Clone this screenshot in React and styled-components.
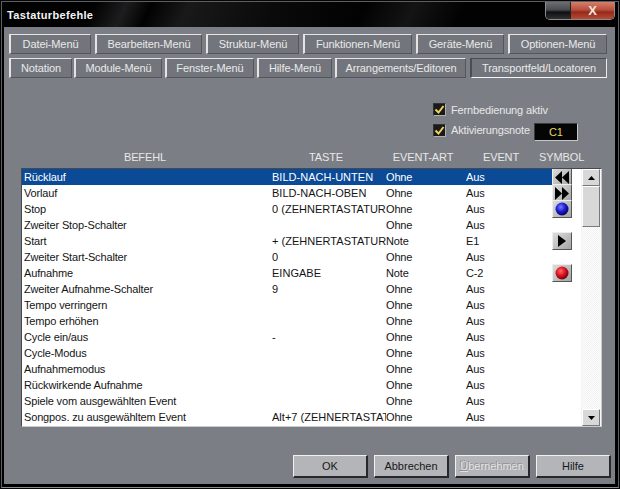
import React from "react";
import styled, { createGlobalStyle } from "styled-components";

const Global = createGlobalStyle`
  html, body { margin: 0; padding: 0; background: #000; }
  body { width: 620px; height: 489px; overflow: hidden; font-family: "Liberation Sans", Arial, sans-serif; }
  #root { width: 620px; height: 489px; }
`;

const Frame = styled.div`
  box-sizing: border-box;
  width: 620px;
  height: 489px;
  background: #050505;
  padding: 1px 0 1px 1px;
  display: flex;
  flex-direction: column;
`;
const Outer = styled.div`
  box-sizing: border-box;
  flex: 1;
  width: 618px;
  border: 1px solid #5c5f62;
  border-bottom: 1px solid #8a8d90;
  background: #000;
  display: flex;
  flex-direction: column;
  padding: 0 3px 3px 2px;
`;
const TitleBar = styled.div`
  height: 25px;
  flex: none;
  margin: 0 -3px 0 -2px;
  padding: 0 0 0 5px;
  display: flex;
  justify-content: space-between;
  align-items: flex-start;
  background:
    linear-gradient(115deg, transparent 15%, #1d1d1f 20%, transparent 24%, #191919 30%, #0a0a0a 44%, transparent 58%, #141414 66%, transparent 74%),
    #020202;
`;
const Title = styled.div`
  color: #f4f4f4;
  font-weight: 700;
  font-size: 11px;
  line-height: 13px;
  letter-spacing: 0.35px;
  padding-top: 7px;
`;
const Controls = styled.div`
  display: flex;
  height: 17px;
  margin-right: 3px;
  border: 1px solid #8d8d8d;
  border-top: 0;
  border-radius: 0 0 5px 5px;
  overflow: hidden;
`;
const MinBtn = styled.div`
  width: 24px;
  background: linear-gradient(#6d7072, #4a4d4f 45%, #0e0f10 60%, #2f3133);
  border-right: 1px solid #222;
`;
const CloseBtn = styled.div`
  width: 43px;
  display: flex;
  align-items: center;
  justify-content: center;
  color: #f0e8dc;
  font: 700 13px "Liberation Sans", sans-serif;
  background: linear-gradient(#d5806c, #b8503c 45%, #96291a 60%, #b84c36);
`;
const Body = styled.div`
  flex: 1;
  background: #7b7e84;
  padding: 7px 5px 0 5px;
  display: flex;
  flex-direction: column;
  min-height: 0;
`;
const TabRow = styled.div`
  display: flex;
  margin-bottom: ${p => p.$mb}px;
`;
const Tab = styled.div`
  box-sizing: border-box;
  width: ${p => p.$w}px;
  margin-right: ${p => p.$gap}px;
  height: 20px;
  flex: none;
  display: flex;
  align-items: center;
  justify-content: center;
  color: #e9e9e9;
  font-size: 11px;
  letter-spacing: -0.1px;
  white-space: nowrap;
  background: #72767c;
  border: 1px solid;
  border-width: 1px 1px 1px 2px;
  border-color: ${p => p.$down ? "#4a4d52 #e8e8e8 #f4f4f4 #4a4d52" : "#e4e4e4 #53565b #53565b #e4e4e4"};
`;
const Options = styled.div`
  height: 39px;
  margin-top: 22px;
  padding-left: 424px;
  display: flex;
  flex-direction: column;
  gap: 2px;
`;
const OptionRow = styled.div`
  display: flex;
  align-items: center;
  height: ${p => p.$h}px;
  gap: 5px;
`;
const Check = styled.div`
  box-sizing: border-box;
  width: 13px;
  height: 13px;
  background: #1a1a1a;
  border: 1px solid;
  border-color: #333 #b0b0b0 #b0b0b0 #333;
  display: flex;
  align-items: center;
  justify-content: center;
`;
const OptionLabel = styled.span`
  color: #e8e8e8;
  font-size: 11px;
  letter-spacing: -0.15px;
`;
const NoteBox = styled.div`
  box-sizing: border-box;
  width: 44px;
  height: 18px;
  margin: 3px 0 0 -1px;
  background: #050505;
  color: #e6d860;
  font-size: 11px;
  display: flex;
  align-items: center;
  justify-content: center;
  border: 1px solid;
  border-color: #3a3a3a #c8c8c8 #c8c8c8 #3a3a3a;
`;
const Headers = styled.div`
  display: grid;
  grid-template-columns: 248px 114px 80px 76px 44px;
  margin: 10px 0 0 12px;
  width: 580px;
  height: 19px;
  align-items: start;
  color: #e8e8e8;
  font-size: 11px;
  line-height: 17px;
  letter-spacing: -0.1px;
  text-align: center;
`;
const HeadCell = styled.span`
  white-space: nowrap;
`;
const List = styled.div`
  box-sizing: border-box;
  width: 581px;
  height: 259px;
  margin-left: 12px;
  background: #fff;
  border: 1px solid;
  border-color: #45484c #c9cbcd #c9cbcd #45484c;
  display: flex;
  overflow: hidden;
`;
const Rows = styled.div`
  flex: 1;
  min-width: 0;
`;
const Row = styled.div`
  display: grid;
  grid-template-columns: 250px 114px 80px 86px 1fr;
  height: 16px;
  align-items: stretch;
  font-size: 11px;
  letter-spacing: -0.15px;
  color: ${p => p.$sel ? "#fff" : "#141414"};
`;
const Cell = styled.span`
  padding-left: ${p => p.$pl || 0}px;
  white-space: nowrap;
  overflow: hidden;
  line-height: 16px;
  letter-spacing: ${p => p.$wide ? "0.02px" : "inherit"};
  background: ${p => p.$sel ? "#0a4a96" : "transparent"};
`;
const SymbolCell = styled.span`
  position: relative;
  height: 16px;
`;
const SymbolBtn = styled.span`
  position: absolute;
  left: 0;
  top: -1px;
  box-sizing: border-box;
  width: 20px;
  height: 18px;
  display: flex;
  align-items: center;
  justify-content: center;
  background: linear-gradient(135deg, #dcdcdc, #a4a6a6);
  border: 1px solid;
  border-color: #eee #555 #555 #eee;
`;
const Scrollbar = styled.div`
  width: 19px;
  flex: none;
  display: flex;
  flex-direction: column;
  background: repeating-conic-gradient(#f0f0f0 0 25%, #fff 0 50%) 0 0 / 2px 2px;
  border-left: 1px solid #f4f4f4;
`;
const ScrollBtn = styled.div`
  box-sizing: border-box;
  width: 18px;
  height: ${p => p.$h}px;
  display: flex;
  align-items: center;
  justify-content: center;
  background: #d8d8d8;
  border: 1px solid;
  border-color: #fff #77797c #77797c #fff;
`;
const Spacer = styled.div`
  flex: 1;
`;
const Footer = styled.div`
  display: flex;
  justify-content: flex-end;
  gap: 6px;
  margin: 28px -1px 0 0;
`;
const FootBtn = styled.div`
  box-sizing: border-box;
  width: 75px;
  height: 23px;
  display: flex;
  align-items: center;
  justify-content: center;
  background: #b4b5b8;
  border: 1px solid;
  border-width: 1px 2px 2px 1px;
  border-color: #f0f0f0 #26282b #26282b #f0f0f0;
  font-size: 11px;
  color: ${p => p.$off ? "#e2e2e2" : "#16181b"};
  text-shadow: ${p => p.$off ? "-1px -1px 0 #8f9094" : "none"};
`;

const Rew = () => (
  <svg width="14" height="13" viewBox="0 0 14 13"><path d="M7 0v13L0 6.5zM14 0v13L7 6.5z" fill="#000" /></svg>
);
const Fwd = () => (
  <svg width="14" height="13" viewBox="0 0 14 13"><path d="M0 0v13l7-6.5zM7 0v13l7-6.5z" fill="#000" /></svg>
);
const Play = () => (
  <svg width="8" height="12" viewBox="0 0 8 12"><path d="M0 0v12l8-6z" fill="#000" /></svg>
);
const Ball = ({ id, a, b, c }) => (
  <svg width="14" height="14" viewBox="0 0 14 14">
    <defs>
      <radialGradient id={id} cx="0.4" cy="0.35" r="0.65">
        <stop offset="0" stopColor={a} />
        <stop offset="0.55" stopColor={b} />
        <stop offset="1" stopColor={c} />
      </radialGradient>
    </defs>
    <circle cx="7" cy="7" r="6.5" fill={`url(#${id})`} />
  </svg>
);
const Tick = () => (
  <svg width="11" height="11" viewBox="0 0 11 11"><path d="M1.5 5.5l3 3L9.5 2" fill="none" stroke="#f2d060" strokeWidth="2" /></svg>
);

const row1 = [["Datei-Menü", 82, 4], ["Bearbeiten-Menü", 107, 4], ["Struktur-Menü", 93, 4], ["Funktionen-Menü", 109, 4], ["Geräte-Menü", 88, 4], ["Optionen-Menü", 99, 0]];
const row2 = [["Notation", 63, 2], ["Module-Menü", 88, 3], ["Fenster-Menü", 89, 3], ["Hilfe-Menü", 75, 3], ["Arrangements/Editoren", 131, 4], ["Transportfeld/Locatoren", 137, 0, true]];

const rows = [
  ["Rücklauf", "BILD-NACH-UNTEN", "Ohne", "Aus", "rew"],
  ["Vorlauf", "BILD-NACH-OBEN", "Ohne", "Aus", "fwd"],
  ["Stop", "0 (ZEHNERTASTATUR)", "Ohne", "Aus", "stop"],
  ["Zweiter Stop-Schalter", "", "Ohne", "Aus"],
  ["Start", "+ (ZEHNERTASTATUR)", "Note", "E1", "play"],
  ["Zweiter Start-Schalter", "0", "Ohne", "Aus"],
  ["Aufnahme", "EINGABE", "Note", "C-2", "rec"],
  ["Zweiter Aufnahme-Schalter", "9", "Ohne", "Aus"],
  ["Tempo verringern", "", "Ohne", "Aus"],
  ["Tempo erhöhen", "", "Ohne", "Aus"],
  ["Cycle ein/aus", "-", "Ohne", "Aus"],
  ["Cycle-Modus", "", "Ohne", "Aus"],
  ["Aufnahmemodus", "", "Ohne", "Aus"],
  ["Rückwirkende Aufnahme", "", "Ohne", "Aus"],
  ["Spiele vom ausgewählten Event", "", "Ohne", "Aus"],
  ["Songpos. zu ausgewähltem Event", "Alt+7 (ZEHNERTASTATUR)", "Ohne", "Aus"],
];

const symbols = {
  rew: <Rew />,
  fwd: <Fwd />,
  play: <Play />,
  stop: <Ball id="blue" a="#7a7cff" b="#1c1cd0" c="#06065a" />,
  rec: <Ball id="red" a="#ff6a6a" b="#dc1020" c="#6a0408" />,
};

export default function App() {
  return (
    <>
      <Global />
      <Frame>
        <Outer>
          <TitleBar>
            <Title>Tastaturbefehle</Title>
            <Controls>
              <MinBtn />
              <CloseBtn>X</CloseBtn>
            </Controls>
          </TitleBar>
          <Body>
            <TabRow $mb={4}>
              {row1.map(([t, w, g]) => <Tab key={t} $w={w} $gap={g}>{t}</Tab>)}
            </TabRow>
            <TabRow $mb={0}>
              {row2.map(([t, w, g, d]) => <Tab key={t} $w={w} $gap={g} $down={d}>{t}</Tab>)}
            </TabRow>
            <Options>
              <OptionRow $h={19}>
                <Check><Tick /></Check>
                <OptionLabel>Fernbedienung aktiv</OptionLabel>
              </OptionRow>
              <OptionRow $h={18}>
                <Check><Tick /></Check>
                <OptionLabel>Aktivierungsnote</OptionLabel>
                <NoteBox>C1</NoteBox>
              </OptionRow>
            </Options>
            <Headers>
              <HeadCell>BEFEHL</HeadCell>
              <HeadCell>TASTE</HeadCell>
              <HeadCell>EVENT-ART</HeadCell>
              <HeadCell>EVENT</HeadCell>
              <HeadCell>SYMBOL</HeadCell>
            </Headers>
            <List>
              <Rows>
                {rows.map(([a, b, c, d, s], i) => (
                  <Row key={a} $sel={i === 0}>
                    <Cell $pl={2} $sel={i === 0}>{a}</Cell>
                    <Cell $wide $sel={i === 0}>{b}</Cell>
                    <Cell $sel={i === 0}>{c}</Cell>
                    <Cell $sel={i === 0}>{d}</Cell>
                    <SymbolCell>{s && <SymbolBtn>{symbols[s]}</SymbolBtn>}</SymbolCell>
                  </Row>
                ))}
              </Rows>
              <Scrollbar>
                <ScrollBtn $h={17}>
                  <svg width="7" height="4" viewBox="0 0 7 4"><path d="M3.5 0L7 4H0z" fill="#000" /></svg>
                </ScrollBtn>
                <ScrollBtn $h={41} />
                <Spacer />
                <ScrollBtn $h={17}>
                  <svg width="7" height="4" viewBox="0 0 7 4"><path d="M0 0h7L3.5 4z" fill="#000" /></svg>
                </ScrollBtn>
              </Scrollbar>
            </List>
            <Footer>
              <FootBtn>OK</FootBtn>
              <FootBtn>Abbrechen</FootBtn>
              <FootBtn $off><span><u>Ü</u>bernehmen</span></FootBtn>
              <FootBtn>Hilfe</FootBtn>
            </Footer>
          </Body>
        </Outer>
      </Frame>
    </>
  );
}
